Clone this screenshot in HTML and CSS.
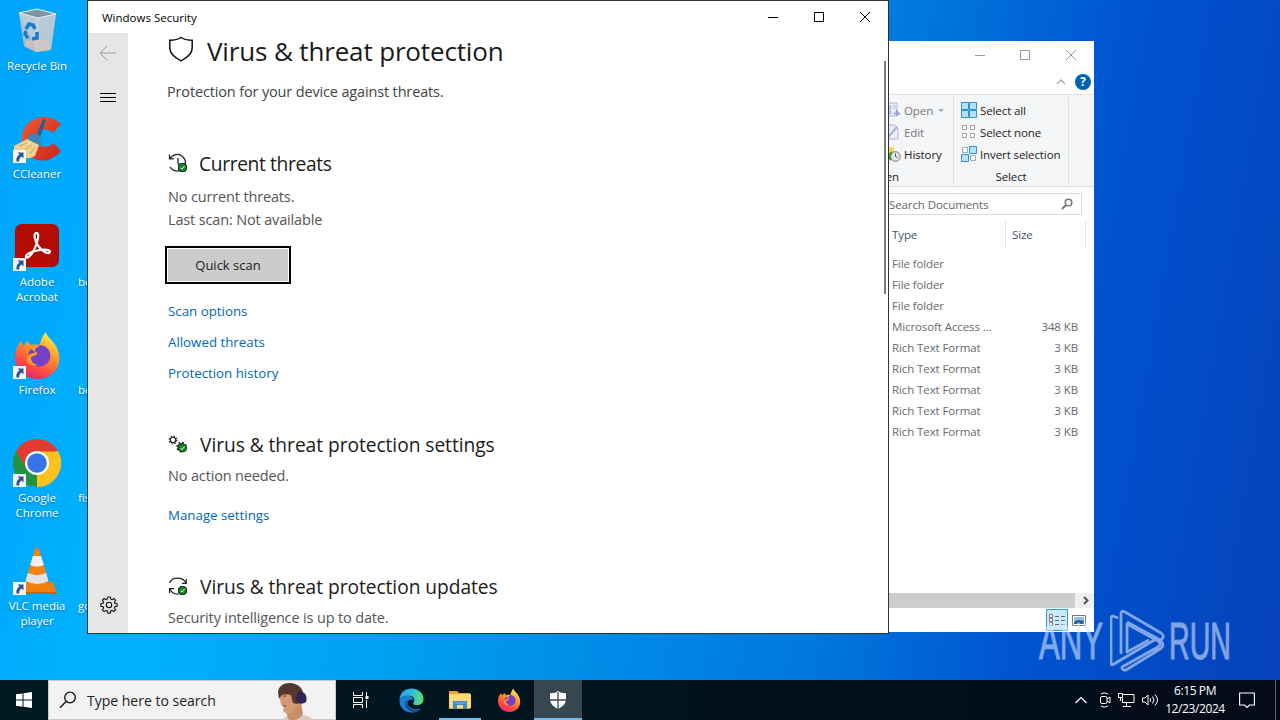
FILE: index.html
```html
<!DOCTYPE html>
<html lang="en">
<head>
    <meta charset="UTF-8">
    <meta name="viewport" content="width=device-width, initial-scale=1.0">
    <title>Windows Security</title>
    <link rel="stylesheet" href="styles.css">
</head>
<body>
    <svg width="0" height="0" class="defs">
        <defs>
            <linearGradient id="fire" x1="0.8" y1="0" x2="0.3" y2="1">
                <stop offset="0" stop-color="#fff44f"/>
                <stop offset="0.4" stop-color="#ff9a2a"/>
                <stop offset="0.75" stop-color="#ff4a45"/>
                <stop offset="1" stop-color="#e5207a"/>
            </linearGradient>
            <linearGradient id="edge" x1="0" y1="0.3" x2="1" y2="0.5">
                <stop offset="0" stop-color="#2a9fe0"/>
                <stop offset="0.5" stop-color="#30bcd8"/>
                <stop offset="1" stop-color="#5fdc72"/>
            </linearGradient>
            <linearGradient id="red" x1="0" y1="0" x2="1" y2="1">
                <stop offset="0" stop-color="#f05a35"/>
                <stop offset="1" stop-color="#c9241c"/>
            </linearGradient>
            <linearGradient id="bin" x1="0" y1="0" x2="1" y2="1">
                <stop offset="0" stop-color="#b9cfdd"/>
                <stop offset="1" stop-color="#8a9fae"/>
            </linearGradient>
            <symbol id="shortcut" viewBox="0 0 13 13">
                <path d="M0 0h13v13H0z" fill="#f4f6f8"/>
                <path d="M4.500 2.500h6v6L8.600 6.600C6.500 8 6 9.500 6.200 11.500H3.500C3 8.500 4 6 6.600 4.600z" fill="#29528f"/>
            </symbol>
            <symbol id="firefox" viewBox="0 0 48 48">
                <path d="M2 24C3 16 6 13 8 10c1 3 2 4 3 5 1-3 3-4 4-5 1 3 3 5 7 5l5-2c1-5 3-9 6-12 1 5 5 7 7 10 6 7 8 16 5 24-4 9-12 13-20 13C11 48 1 38 2 24z" fill="url(#fire)"/>
                <path d="M15 25c1-8 8-13 16-10 6 3 8 9 5 15-4 6-11 7-16 4-3-2-5-5-5-9z" fill="#7440c8"/>
                <path d="M14 27c1-5 5-4 9-6-3-1-5-4-9-5 4-3 9-3 13-1-4 1-5 3-5 5 3 1 3 3 1 4-3 2-5 1-5 3 0 4 3 6 7 7-5 2-12-1-11-7z" fill="#ff9b25"/>
            </symbol>
            <symbol id="ok" viewBox="0 0 10 10">
                <circle cx="5" cy="5" r="4.700" fill="#108a22"/>
                <path d="M2.800 5.200l1.600 1.600 2.900-3.500" fill="none" stroke="#fff" stroke-width="1.100"/>
            </symbol>
        </defs>
    </svg>

    <div class="desktop">
        <div class="desktop-icons">
            <div class="desktop-item">
                <svg class="app-icon" viewBox="0 0 48 48">
                    <path d="M6 6L24 2l19 5-5 36-15 2-12-6z" fill="url(#bin)"/>
                    <path d="M6 6l19 4 18-3-5 36-14 2z" fill="#bed0dc" opacity="0.75"/>
                    <path d="M6 6L24 2l19 5-18 4z" fill="#7d95a5" stroke="#e7f0f5"/>
                    <path d="M25 11l-2 34" stroke="#d8e4ea"/>
                    <path d="M13 34l10-2 14 2-1 9-13 2-11-5z" fill="#dfc7bd" opacity="0.6"/>
                    <g fill="none" stroke="#187bd0" stroke-width="3.500">
                        <path d="M13 22l3-5 4 1 2 4M24 25l0 6-5 1M15 31l-3-4 1-3"/>
                    </g>
                </svg>
                <span class="label">Recycle Bin</span>
            </div>
            <div class="desktop-item">
                <svg class="app-icon" viewBox="0 0 48 48">
                    <path d="M48 9C32-5 11 4 9 21c-2 16 13 29 28 23 5-2 8-5 11-8l-8-8c-6 7-16 4-16-5 0-8 9-12 16-5z" fill="url(#red)"/>
                    <path d="M30 4l3 1-6 17-4-1z" fill="#245f91"/>
                    <path d="M14 24c2-6 9-7 13-3l2 6-4 5z" fill="#3f84b6"/>
                    <path d="M1 31l13-7c4 2 8 4 12 6l-4 11c-7 4-14 2-21 0z" fill="#f1d295"/>
                    <path d="M6 31l8-3M10 36l9-6M17 39l5-7" stroke="#cba65d"/>
                    <use href="#shortcut" x="0" y="35" width="13" height="13"/>
                </svg>
                <span class="label">CCleaner</span>
            </div>
            <div class="desktop-item">
                <svg class="app-icon" viewBox="0 0 48 48">
                    <rect x="2" y="1" width="44" height="43" rx="7" fill="#b30b00"/>
                    <path d="M23 10c4-1 2 9-2 17-3 6-7 9-8 7-1-3 7-6 14-7 6-1 10 0 10 2-1 3-7 0-11-5-4-5-6-13-3-14z" fill="none" stroke="#fff" stroke-width="2.200"/>
                    <use href="#shortcut" x="0" y="35" width="13" height="13"/>
                </svg>
                <span class="label">Adobe<br>Acrobat</span>
            </div>
            <div class="desktop-item">
                <svg class="app-icon" viewBox="0 0 48 48">
                    <use href="#firefox" x="0" y="0" width="48" height="48"/>
                    <use href="#shortcut" x="0" y="35" width="13" height="13"/>
                </svg>
                <span class="label">Firefox</span>
            </div>
            <div class="desktop-item">
                <svg class="app-icon" viewBox="0 0 48 48">
                    <path d="M24 24L3.200 12A24 24 0 0 1 44.800 12z" fill="#e33b2e"/>
                    <path d="M24 24L44.800 12A24 24 0 0 1 24 48z" fill="#fcc31e"/>
                    <path d="M24 24L24 48A24 24 0 0 1 3.200 12z" fill="#229342"/>
                    <path d="M24 12.500h21A24 24 0 0 1 24 48l10-18z" fill="#fcc31e"/>
                    <path d="M3.200 12L14 30 24 12.500z" fill="#e33b2e"/>
                    <circle cx="24" cy="24" r="12" fill="#fff"/>
                    <circle cx="24" cy="24" r="9.800" fill="#3573e6"/>
                    <use href="#shortcut" x="0" y="35" width="13" height="13"/>
                </svg>
                <span class="label">Google<br>Chrome</span>
            </div>
            <div class="desktop-item">
                <svg class="app-icon" viewBox="0 0 48 48">
                    <path d="M12 35h28l4 12H8z" fill="#ef7e0c"/>
                    <path d="M8 45h36v2H8z" fill="#cf6207"/>
                    <path d="M22 2q2-2 4 0l10 34q-12 6-24 0z" fill="#f48112"/>
                    <path d="M19.800 9h8.400l2.600 9q-7 3-13.600 0z" fill="#f0f0f0"/>
                    <path d="M14.800 26q9 4 18.300 0l2.300 8q-11 6-22.900 0z" fill="#e3e3e3"/>
                    <use href="#shortcut" x="0" y="35" width="13" height="13"/>
                </svg>
                <span class="label">VLC media<br>player</span>
            </div>
        </div>
        <div class="desktop-icons second">
            <div class="desktop-item"></div>
            <div class="desktop-item"></div>
            <div class="desktop-item"><span class="label">be</span></div>
            <div class="desktop-item"><span class="label">be</span></div>
            <div class="desktop-item"><span class="label">fish</span></div>
            <div class="desktop-item"><span class="label">go</span></div>
        </div>

        <div class="window explorer">
            <div class="explorer-title">
                <svg width="102" height="12" viewBox="0 0 102 12" fill="none" stroke="#999">
                    <path d="M0 6.500h10M45.500 1.500h9v9h-9zM91 1l10 10M101 1L91 11"/>
                </svg>
            </div>
            <div class="explorer-tabs">
                <svg width="10" height="6" viewBox="0 0 10 6"><path d="M1 5l4-4 4 4" fill="none" stroke="#aaa" stroke-width="1.400"/></svg>
                <span class="help">?</span>
            </div>
            <div class="ribbon">
                <div class="ribbon-group open-group">
                    <div class="ribbon-row disabled">
                        <svg width="16" height="16" viewBox="0 0 16 16"><path d="M1 1h11v13H1z" fill="#e6ebf7" stroke="#aeb8d4"/><path d="M3 4h3v3H3zM3 9h3v3H3zM8 4h3M8 6h3" fill="#b5c1df" stroke="#b5c1df"/><path d="M12 8v6M9 11.500h6" stroke="#97a5c8" stroke-width="2"/></svg>
                        <span>Open</span><i class="caret"></i>
                    </div>
                    <div class="ribbon-row disabled">
                        <svg width="16" height="16" viewBox="0 0 16 16"><path d="M1 1h9l3 3v11H1z" fill="#e9edf7" stroke="#aeb8d4"/><path d="M3 13l9-10" stroke="#a7b2cf" stroke-width="2"/></svg>
                        <span>Edit</span>
                    </div>
                    <div class="ribbon-row">
                        <svg width="16" height="16" viewBox="0 0 16 16"><path d="M0 1h9v13H0z" fill="#ffd257"/><path d="M1 10l6-5v3h3v4H6v3z" fill="#35a322"/><circle cx="10.500" cy="10.500" r="4.800" fill="#e3e5e6" stroke="#777"/><path d="M10.500 7.500v3l2 1" fill="none" stroke="#555"/></svg>
                        <span>History</span>
                    </div>
                    <div class="group-name">Open</div>
                </div>
                <div class="ribbon-group select-group">
                    <div class="ribbon-row">
                        <svg width="16" height="16" viewBox="0 0 16 16"><path d="M.5.5h7v7h-7zM8.500.5h7v7h-7zM.5 8.500h7v7h-7zM8.500 8.500h7v7h-7z" fill="#b5e1fb" stroke="#3091d0"/></svg>
                        <span>Select all</span>
                    </div>
                    <div class="ribbon-row">
                        <svg width="16" height="16" viewBox="0 0 16 16"><path d="M1.500 1.500h4v4h-4zM9.500 1.500h4v4h-4zM1.500 9.500h4v4h-4zM9.500 9.500h4v4h-4z" fill="#fff" stroke="#a0a0a0"/></svg>
                        <span>Select none</span>
                    </div>
                    <div class="ribbon-row">
                        <svg width="16" height="16" viewBox="0 0 16 16"><path d="M1.500 1.500h5v5h-5zM9.500 9.500h5v5h-5z" fill="#fff" stroke="#9ab"/><path d="M8.500.5h7v7h-7zM.5 8.500h7v7h-7z" fill="#b5e1fb" stroke="#3091d0"/></svg>
                        <span>Invert selection</span>
                    </div>
                    <div class="group-name">Select</div>
                </div>
            </div>
            <div class="address">
                <div class="search-docs">
                    <span>Search Documents</span>
                    <svg width="12" height="12" viewBox="0 0 12 12" fill="none" stroke="#777"><circle cx="7.500" cy="4.500" r="3.300" stroke-width="1.500"/><path d="M5 7L1 11" stroke-width="2"/></svg>
                </div>
            </div>
            <div class="file-head"><span>Type</span><span>Size</span></div>
            <div class="file-list">
                <div class="file-row"><span>File folder</span><span></span></div>
                <div class="file-row"><span>File folder</span><span></span></div>
                <div class="file-row"><span>File folder</span><span></span></div>
                <div class="file-row"><span>Microsoft Access ...</span><span>348 KB</span></div>
                <div class="file-row"><span>Rich Text Format</span><span>3 KB</span></div>
                <div class="file-row"><span>Rich Text Format</span><span>3 KB</span></div>
                <div class="file-row"><span>Rich Text Format</span><span>3 KB</span></div>
                <div class="file-row"><span>Rich Text Format</span><span>3 KB</span></div>
                <div class="file-row"><span>Rich Text Format</span><span>3 KB</span></div>
            </div>
            <div class="h-scroll">
                <div class="h-thumb"></div>
                <svg width="19" height="15" viewBox="0 0 19 15"><path d="M9 4l3.500 3.500L9 11" fill="none" stroke="#555" stroke-width="2"/></svg>
            </div>
            <div class="status">
                <span class="view-btn active">
                    <svg width="16" height="14" viewBox="0 0 16 14"><path d="M.5 1.500h3v3h-3zM.5 5.500h3v3h-3zM.5 9.500h3v3h-3z" fill="#fff" stroke="#8b6f86"/><path d="M6 3.500h4M12 3.500h4M6 7.500h4M12 7.500h4M6 11.500h4M12 11.500h4" stroke="#667"/></svg>
                </span>
                <span class="view-btn">
                    <svg width="14" height="11" viewBox="0 0 14 11"><path d="M.5.5h13v10H.5z" fill="#fff" stroke="#777"/><path d="M2 2h10v7H2z" fill="#8dc0ee"/><path d="M2 7l4-2 6 1v3H2z" fill="#245583"/></svg>
                </span>
            </div>
        </div>

        <div class="window security">
            <div class="titlebar">
                <span>Windows Security</span>
                <svg width="104" height="12" viewBox="0 0 104 12" fill="none" stroke="#000">
                    <path d="M0 6.500h10M46.500 1.500h9v9h-9zM92 1l10 10M102 1L92 11"/>
                </svg>
            </div>
            <div class="security-body">
                <div class="nav">
                    <svg width="18" height="16" viewBox="0 0 18 16" fill="none" stroke="#999"><path d="M1 8h16M8 1L1 8l7 7"/></svg>
                    <svg class="burger" width="18" height="10" viewBox="0 0 18 10" stroke="#000"><path d="M1 .5h16M1 4.500h16M1 8.500h16"/></svg>
                    <svg class="gear" width="18" height="18" viewBox="0 0 18 18" fill="none" stroke="#111" stroke-width="1.100">
                        <path d="M7.700 1h2.600l.5 2.200 1.200.5L14 2.500 15.600 4.200 14.400 6.100l.5 1.200 2.200.5v2.500l-2.200.5-.5 1.200 1.200 1.900-1.700 1.700-1.900-1.200-1.200.5-.5 2.200H7.700l-.5-2.200-1.200-.5-1.900 1.200-1.700-1.700 1.200-1.900-.5-1.200L.9 10.300V7.800l2.200-.5.5-1.200-1.200-1.900L4.100 2.500 6 3.700l1.200-.5z"/>
                        <circle cx="9" cy="9" r="2.700"/>
                    </svg>
                </div>
                <div class="page">
                    <div class="page-title">
                        <svg width="26" height="26" viewBox="0 0 26 26" fill="none" stroke="#111" stroke-width="1.500"><path d="M13 1.500c-3 2-7 3-11.200 2.700V12c0 6 4.500 9.500 11.200 12.800 6.700-3.300 11.200-6.800 11.200-12.800V4.200C20 4.500 16 3.500 13 1.500z"/></svg>
                        <h1>Virus &amp; threat protection</h1>
                    </div>
                    <p class="intro">Protection for your device against threats.</p>

                    <div class="section current">
                        <div class="section-title">
                            <svg width="20" height="20" viewBox="0 0 20 20" fill="none" stroke="#222" stroke-width="1.300">
                                <path d="M2 5.500A8.300 8.300 0 1 1 2 14M1.500 1.500v4.300h4.300M10 5v5.500l3 2.500"/>
                                <use href="#ok" x="10" y="10" width="9" height="9"/>
                            </svg>
                            <h2>Current threats</h2>
                        </div>
                        <p class="lines">No current threats.<br>Last scan: Not available</p>
                        <button class="scan-btn">Quick scan</button>
                        <a href="#">Scan options</a>
                        <a href="#">Allowed threats</a>
                        <a href="#">Protection history</a>
                    </div>

                    <div class="section settings">
                        <div class="section-title">
                            <svg width="20" height="20" viewBox="0 0 20 20" fill="none" stroke="#222">
                                <circle cx="5" cy="6" r="2.700" stroke-width="1.100"/>
                                <circle cx="5" cy="6" r="3.800" stroke-width="1.300" stroke-dasharray="1.400 1.600"/>
                                <circle cx="13.500" cy="13" r="3.500" stroke-width="1.100"/>
                                <circle cx="13.500" cy="13" r="4.700" stroke-width="1.300" stroke-dasharray="1.700 2"/>
                                <use href="#ok" x="10" y="9.500" width="9" height="9"/>
                            </svg>
                            <h2>Virus &amp; threat protection settings</h2>
                        </div>
                        <p>No action needed.</p>
                        <a href="#">Manage settings</a>
                    </div>

                    <div class="section updates">
                        <div class="section-title">
                            <svg width="20" height="20" viewBox="0 0 20 20" fill="none" stroke="#222" stroke-width="1.200">
                                <path d="M1.500 7C4 .5 15 .5 18 7M18.300 3v4.300H14M1.500 17v-4.300H6M1.800 13c2 4 5 5.500 9 5"/>
                                <use href="#ok" x="10" y="10" width="9" height="9"/>
                            </svg>
                            <h2>Virus &amp; threat protection updates</h2>
                        </div>
                        <p>Security intelligence is up to date.</p>
                    </div>
                </div>
                <div class="v-thumb"></div>
            </div>
        </div>

        <div class="watermark">
            <span>ANY</span>
            <svg width="56" height="62" viewBox="0 0 56 62" fill="none" stroke="#dce8ff" stroke-width="2.800" stroke-linejoin="round">
                <path d="M8 8L3 6q-2 0-2 3v44q0 3 3 1l42-25"/>
                <path d="M11 44V4q0-4 4-2l36 21q4 3 1 6l-2 1L17 12"/>
                <path d="M50 30q6 5 0 9L16 60q-4 1-4-3l36-20q4-3 0-6L17 14v28l22-12"/>
            </svg>
            <span class="run">RUN</span>
        </div>
    </div>

    <div class="taskbar">
        <div class="start">
            <svg width="16" height="16" viewBox="0 0 16 16" fill="#fff"><path d="M0 2.300L6.500 1.400v6.200H0zM7.500 1.200L16 0v7.600H7.500zM0 8.500h6.500v6.200L0 13.800zM7.500 8.500H16V16l-8.500-1.200z"/></svg>
        </div>
        <div class="search">
            <svg width="18" height="18" viewBox="0 0 18 18" fill="none" stroke="#111" stroke-width="1.300"><circle cx="11" cy="6.500" r="5.300"/><path d="M7.300 10.300L1 16.800"/></svg>
            <span>Type here to search</span>
            <svg class="portrait" width="40" height="38" viewBox="0 0 40 38">
                <path d="M8 38c3-4 8-5 12-6 9 0 15 1 19 6z" fill="#d8cdbd"/>
                <path d="M10 20h17l2 12c-4 7-12 7-15 5z" fill="#c98d68"/>
                <path d="M5 10c0-8 15-10 20-1l1 11-6 9c-5 4-10 3-11-1l1-3-3-2z" fill="#d39a74"/>
                <path d="M4 10C5-1 20-1 26 5c5 4 4 14-3 17l-4-1-2-8c-4-1-9-1-10 1L5 17z" fill="#54372d"/>
                <path d="M24 10c6-2 10 4 8 10-4 3-9 2-10-3z" fill="#30235e"/>
                <path d="M9 14h3M9 24h3" stroke="#6b3528"/>
            </svg>
        </div>
        <div class="task">
            <svg width="18" height="16" viewBox="0 0 18 16" fill="none" stroke="#fff"><path d="M1.500 0v3.500h9V0M1.500 5.500h9v5h-9zM1.500 16v-3.500h9V16M14.500 0v4M14.500 8v8"/><path d="M13.500 4h3v3h-3z" fill="#fff" stroke="none"/></svg>
        </div>
        <div class="task edge-task">
            <svg width="25" height="25" viewBox="0 0 24 24">
                <path d="M.5 11C1 4 6 .5 12 .5c7 0 11.500 5 11.500 10 0 4-3 6-6 6-3 0-4.500-1-3.500-2.500 2-3 0-6.500-4.500-6.500C5 7.500 1.500 9 .5 11z" fill="url(#edge)"/>
                <path d="M.5 12C1 8.500 5 7 9 7.500c3 .3 5 2 5 4.500-2-2-5-1-5.500 2C8 19 14 22 20.500 19.500 18 23 15 23.700 12 23.500 5 23.500.2 18 .5 12z" fill="#1c7fd6"/>
                <path d="M9.500 11.500C7.500 14 8 17 10 19c3 3 7 3 11.500.5-1 1.500-2 2.500-4 3.300C11 24 5.500 19.500 6 15c.2-2 1.500-3 3.500-3.500z" fill="#114a8b"/>
            </svg>
        </div>
        <div class="task running">
            <svg width="22" height="20" viewBox="0 0 22 20"><path d="M0 1h8l2 2h11v16H0z" fill="#e9a52c"/><path d="M0 4h22v14H0z" fill="#ffd978"/><path d="M4 11h14v8h-4v-4H8v4H4z" fill="#3b8bcd"/><path d="M6 13h10" stroke="#72baf0"/></svg>
        </div>
        <div class="task">
            <svg width="24" height="24" viewBox="0 0 48 48"><use href="#firefox" width="48" height="48"/></svg>
        </div>
        <div class="task running active">
            <svg width="18" height="18" viewBox="0 0 18 18"><path d="M9 0c2 1.500 5 2.300 8 2.200V8c0 5-4 8-8 10-4-2-8-5-8-10V2.200C4 2.300 7 1.500 9 0z" fill="#fff"/><path d="M9 1v17M1 9h16" stroke="#38474f" stroke-width="1.300"/></svg>
        </div>
        <div class="tray">
            <svg width="12" height="8" viewBox="0 0 12 8"><path d="M.5 7L6 1.500 11.500 7" fill="none" stroke="#fff" stroke-width="1.200"/></svg>
            <svg width="12" height="16" viewBox="0 0 12 16" fill="none" stroke="#fff"><rect x="1.500" y="4.500" width="6.500" height="7" rx="1.500"/><path d="M8 7l3-2v6L8 9M2 2q3-2.500 7 0M2 14q3 2.500 7 0"/></svg>
            <svg width="17" height="14" viewBox="0 0 17 14" fill="none" stroke="#fff"><path d="M5 1.500h11v8H4.500V5M8.500 10v3M5 13.500h8M.5.5h4v4h-4zM2.500 5v3"/></svg>
            <svg width="17" height="14" viewBox="0 0 17 14" fill="none" stroke="#fff"><path d="M.5 5h2.500l3-3v10L3 9H.5zM8 5q1.500 2 0 4M10.500 3.500q3 3.500 0 7M13 1.500q5 5.500 0 11"/></svg>
            <div class="clock">6:15 PM<br>12/23/2024</div>
            <svg width="16" height="17" viewBox="0 0 16 17" fill="none" stroke="#fff" stroke-width="1.100"><path d="M.6 1h14.800v12h-4.900L8 15.500 5.500 13H.6z"/></svg>
        </div>
    </div>
</body>
</html>
```
FILE: styles.css
```css
* {
    margin: 0;
    padding: 0;
    box-sizing: border-box;
}
body {
    width: 1280px;
    height: 720px;
    overflow: hidden;
    font-family: "Open Sans", "Noto Sans", sans-serif;
    font-size: 12px;
}
svg {
    display: block;
    flex-shrink: 0;
}
.defs {
    position: absolute;
}
.desktop {
    position: relative;
    display: flex;
    height: 680px;
    overflow: hidden;
    background: linear-gradient(100deg, #00a4fa 0%, #00b2ff 16%, #00a2f5 34%, #0078dc 66%, #0052d0 82%, #0642ba 100%);
}
.desktop-icons {
    width: 74px;
}
.desktop-item {
    height: 108px;
    padding-top: 7px;
    display: flex;
    flex-direction: column;
    align-items: center;
}
.app-icon {
    width: 48px;
    height: 48px;
}
.label {
    margin-top: 3px;
    color: white;
    font-size: 11.5px;
    line-height: 15px;
    text-align: center;
    white-space: nowrap;
    text-shadow: 0 1px 2px rgba(0, 0, 0, 0.35);
}
.second {
    width: 30px;
}
.second .desktop-item {
    padding: 55px 0 0 4px;
    align-items: flex-start;
}
.window {
    position: absolute;
    background: white;
}

/* file explorer */
.explorer {
    left: 600px;
    top: 41px;
    width: 494px;
    height: 591px;
    display: flex;
    flex-direction: column;
    font-size: 11.5px;
    letter-spacing: -0.1px;
}
.explorer-title {
    height: 29px;
    padding: 8px 17px 0 0;
    display: flex;
    justify-content: flex-end;
}
.explorer-tabs {
    height: 24px;
    display: flex;
    align-items: center;
    justify-content: flex-end;
    gap: 9px;
    padding-right: 3px;
}
.help {
    width: 16px;
    height: 16px;
    border-radius: 50%;
    background: #0063b1;
    color: white;
    font-weight: bold;
    line-height: 16px;
    text-align: center;
}
.ribbon {
    height: 93px;
    display: flex;
    justify-content: flex-end;
    padding: 2px 25px 1px 0;
    background: #f5f6f7;
    border-top: 1px solid #e0e2e4;
    border-bottom: 1px solid #dcdddf;
}
.ribbon-group {
    padding: 2px 7px 0;
    border-right: 1px solid #dfe0e2;
    color: #222;
}
.open-group {
    width: 74px;
    padding-left: 5px;
}
.select-group {
    width: 115px;
}
.ribbon-row {
    height: 22px;
    display: flex;
    align-items: center;
    gap: 3px;
    white-space: nowrap;
}
.disabled {
    color: #777;
}
.caret {
    margin-left: 2px;
    border: 3px solid transparent;
    border-top-color: #aaa;
    border-bottom: 0;
}
.group-name {
    line-height: 24px;
    text-align: center;
}
.open-group .group-name {
    margin-left: -62px;
}
.address {
    padding: 6px 12px 0;
}
.search-docs {
    height: 22px;
    display: flex;
    align-items: center;
    justify-content: space-between;
    padding: 0 8px 0 276px;
    border: 1px solid #d9d9d9;
    color: #666;
}
.file-head {
    height: 27px;
    margin: 6px 8px 0 292px;
    display: flex;
    line-height: 28px;
    color: #44546c;
    border-right: 1px solid #e5e5e5;
}
.file-head span:first-child {
    width: 114px;
    margin-right: 6px;
    border-right: 1px solid #e5e5e5;
}
.file-list {
    flex: 1;
    padding: 5px 16px 0 292px;
    color: #6a6a6a;
}
.file-row {
    height: 21px;
    line-height: 21px;
    display: flex;
    justify-content: space-between;
}
.h-scroll {
    height: 15px;
    display: flex;
    background: #f0f0f0;
}
.h-thumb {
    flex: 1;
    background: #cdcdcd;
}
.status {
    height: 24px;
    display: flex;
    justify-content: flex-end;
    padding: 1px 4px 0 0;
}
.view-btn {
    width: 22px;
    height: 22px;
    display: flex;
    align-items: center;
    justify-content: center;
}
.view-btn.active {
    background: #ccebf8;
    border: 1px solid #2aa0c8;
}

/* security center */
.security {
    left: 87px;
    top: 0;
    width: 802px;
    height: 634px;
    border: 1px solid #333;
    display: flex;
    flex-direction: column;
}
.titlebar {
    height: 32px;
    display: flex;
    align-items: center;
    justify-content: space-between;
    padding: 0 16px 0 14px;
    font-size: 11.5px;
}
.security-body {
    flex: 1;
    min-height: 0;
    display: flex;
    overflow: hidden;
}
.nav {
    width: 40px;
    background: #e6e6e6;
    display: flex;
    flex-direction: column;
    align-items: center;
    padding: 12px 0 19px;
}
.burger {
    margin-top: 32px;
}
.gear {
    margin: auto 0 0 2px;
}
.page {
    flex: 1;
    padding-left: 40px;
    color: #555;
    font-size: 14.5px;
    letter-spacing: -0.15px;
}
.page-title {
    display: flex;
    align-items: center;
    height: 36px;
    gap: 13px;
}
.page-title svg {
    margin-top: -4px;
}
h1, h2 {
    font-weight: 400;
    color: #1a1a1a;
    white-space: nowrap;
}
h1 {
    font-size: 26px;
    letter-spacing: -0.15px;
}
.intro {
    margin: 12px 0 0 -1px;
    line-height: 22px;
    color: #444;
}
.section {
    margin-top: 48px;
    line-height: 23px;
}
.section-title {
    height: 24px;
    display: flex;
    align-items: center;
    gap: 12px;
}
h2 {
    font-size: 19.2px;
    letter-spacing: -0.05px;
}
.current .section-title {
    gap: 11px;
}
.current h2 {
    letter-spacing: -0.35px;
}
.lines {
    margin-top: 10px;
}
.scan-btn {
    display: block;
    width: 126px;
    height: 38px;
    margin: 15px 0 15px -3px;
    border: 2px solid black;
    background: #ccc;
    box-shadow: inset 0 0 0 1px white;
    font-family: inherit;
    font-size: 13px;
    color: #222;
}
.section a {
    display: block;
    height: 31px;
    font-size: 13.3px;
    letter-spacing: 0;
    line-height: 24px;
    color: #0067b8;
    text-decoration: none;
}
.settings {
    margin-top: 40px;
}
.settings p {
    margin: 8px 0 16px;
}
.updates {
    margin-top: 40px;
}
.updates p {
    margin-top: 8px;
}
.v-thumb {
    width: 2px;
    height: 233px;
    margin: 28px 2px 0 0;
    background: #7a7a7a;
}

.watermark {
    position: absolute;
    left: 1039px;
    top: 610px;
    display: flex;
    align-items: center;
    gap: 11px;
    color: #dce8ff;
    opacity: 0.58;
    font-family: "Liberation Sans", sans-serif;
    font-size: 52px;
    line-height: 62px;
    -webkit-text-stroke: 1px #dce8ff;
}
.watermark span {
    width: 60px;
    transform: scaleX(0.6);
    transform-origin: left;
}
.watermark .run {
    margin-left: -8px;
    transform: scaleX(0.55);
}

/* taskbar */
.taskbar {
    height: 40px;
    display: flex;
    background: linear-gradient(90deg, #001923, #01131d 50%, #020b18);
    color: white;
}
.start, .task {
    width: 48px;
    display: flex;
    align-items: center;
    justify-content: center;
}
.search {
    position: relative;
    width: 288px;
    height: 40px;
    display: flex;
    align-items: center;
    gap: 10px;
    padding: 0 0 0 10px;
    background: #f2f2f2;
    border: 1px solid #c8c8c8;
    color: #222;
    font-size: 14px;
}
.portrait {
    position: absolute;
    left: 225px;
    bottom: -1px;
}
.task {
    width: 49.5px;
}
.edge-task {
    padding-left: 2px;
}
.running {
    position: relative;
}
.running::after {
    content: "";
    position: absolute;
    left: 4px;
    right: 4px;
    bottom: 0;
    height: 2px;
    background: #76b9ed;
}
.active.task {
    width: 48px;
    background: #38474f;
}
.active.task::after {
    left: 0;
    right: 0;
}
.tray {
    flex: 1;
    display: flex;
    align-items: center;
    justify-content: flex-end;
    margin-right: 4px;
    padding-right: 20px;
    border-right: 1px solid #5a6270;
}
.tray svg {
    margin-right: 7px;
}
.tray svg:nth-child(4) {
    margin-right: 3px;
}
.clock {
    width: 66px;
    margin-right: 11px;
    line-height: 18px;
    text-align: center;
    letter-spacing: -0.4px;
}
.tray svg:first-child {
    margin-right: 12px;
}
.tray svg:last-child {
    margin-right: 0;
}
```
